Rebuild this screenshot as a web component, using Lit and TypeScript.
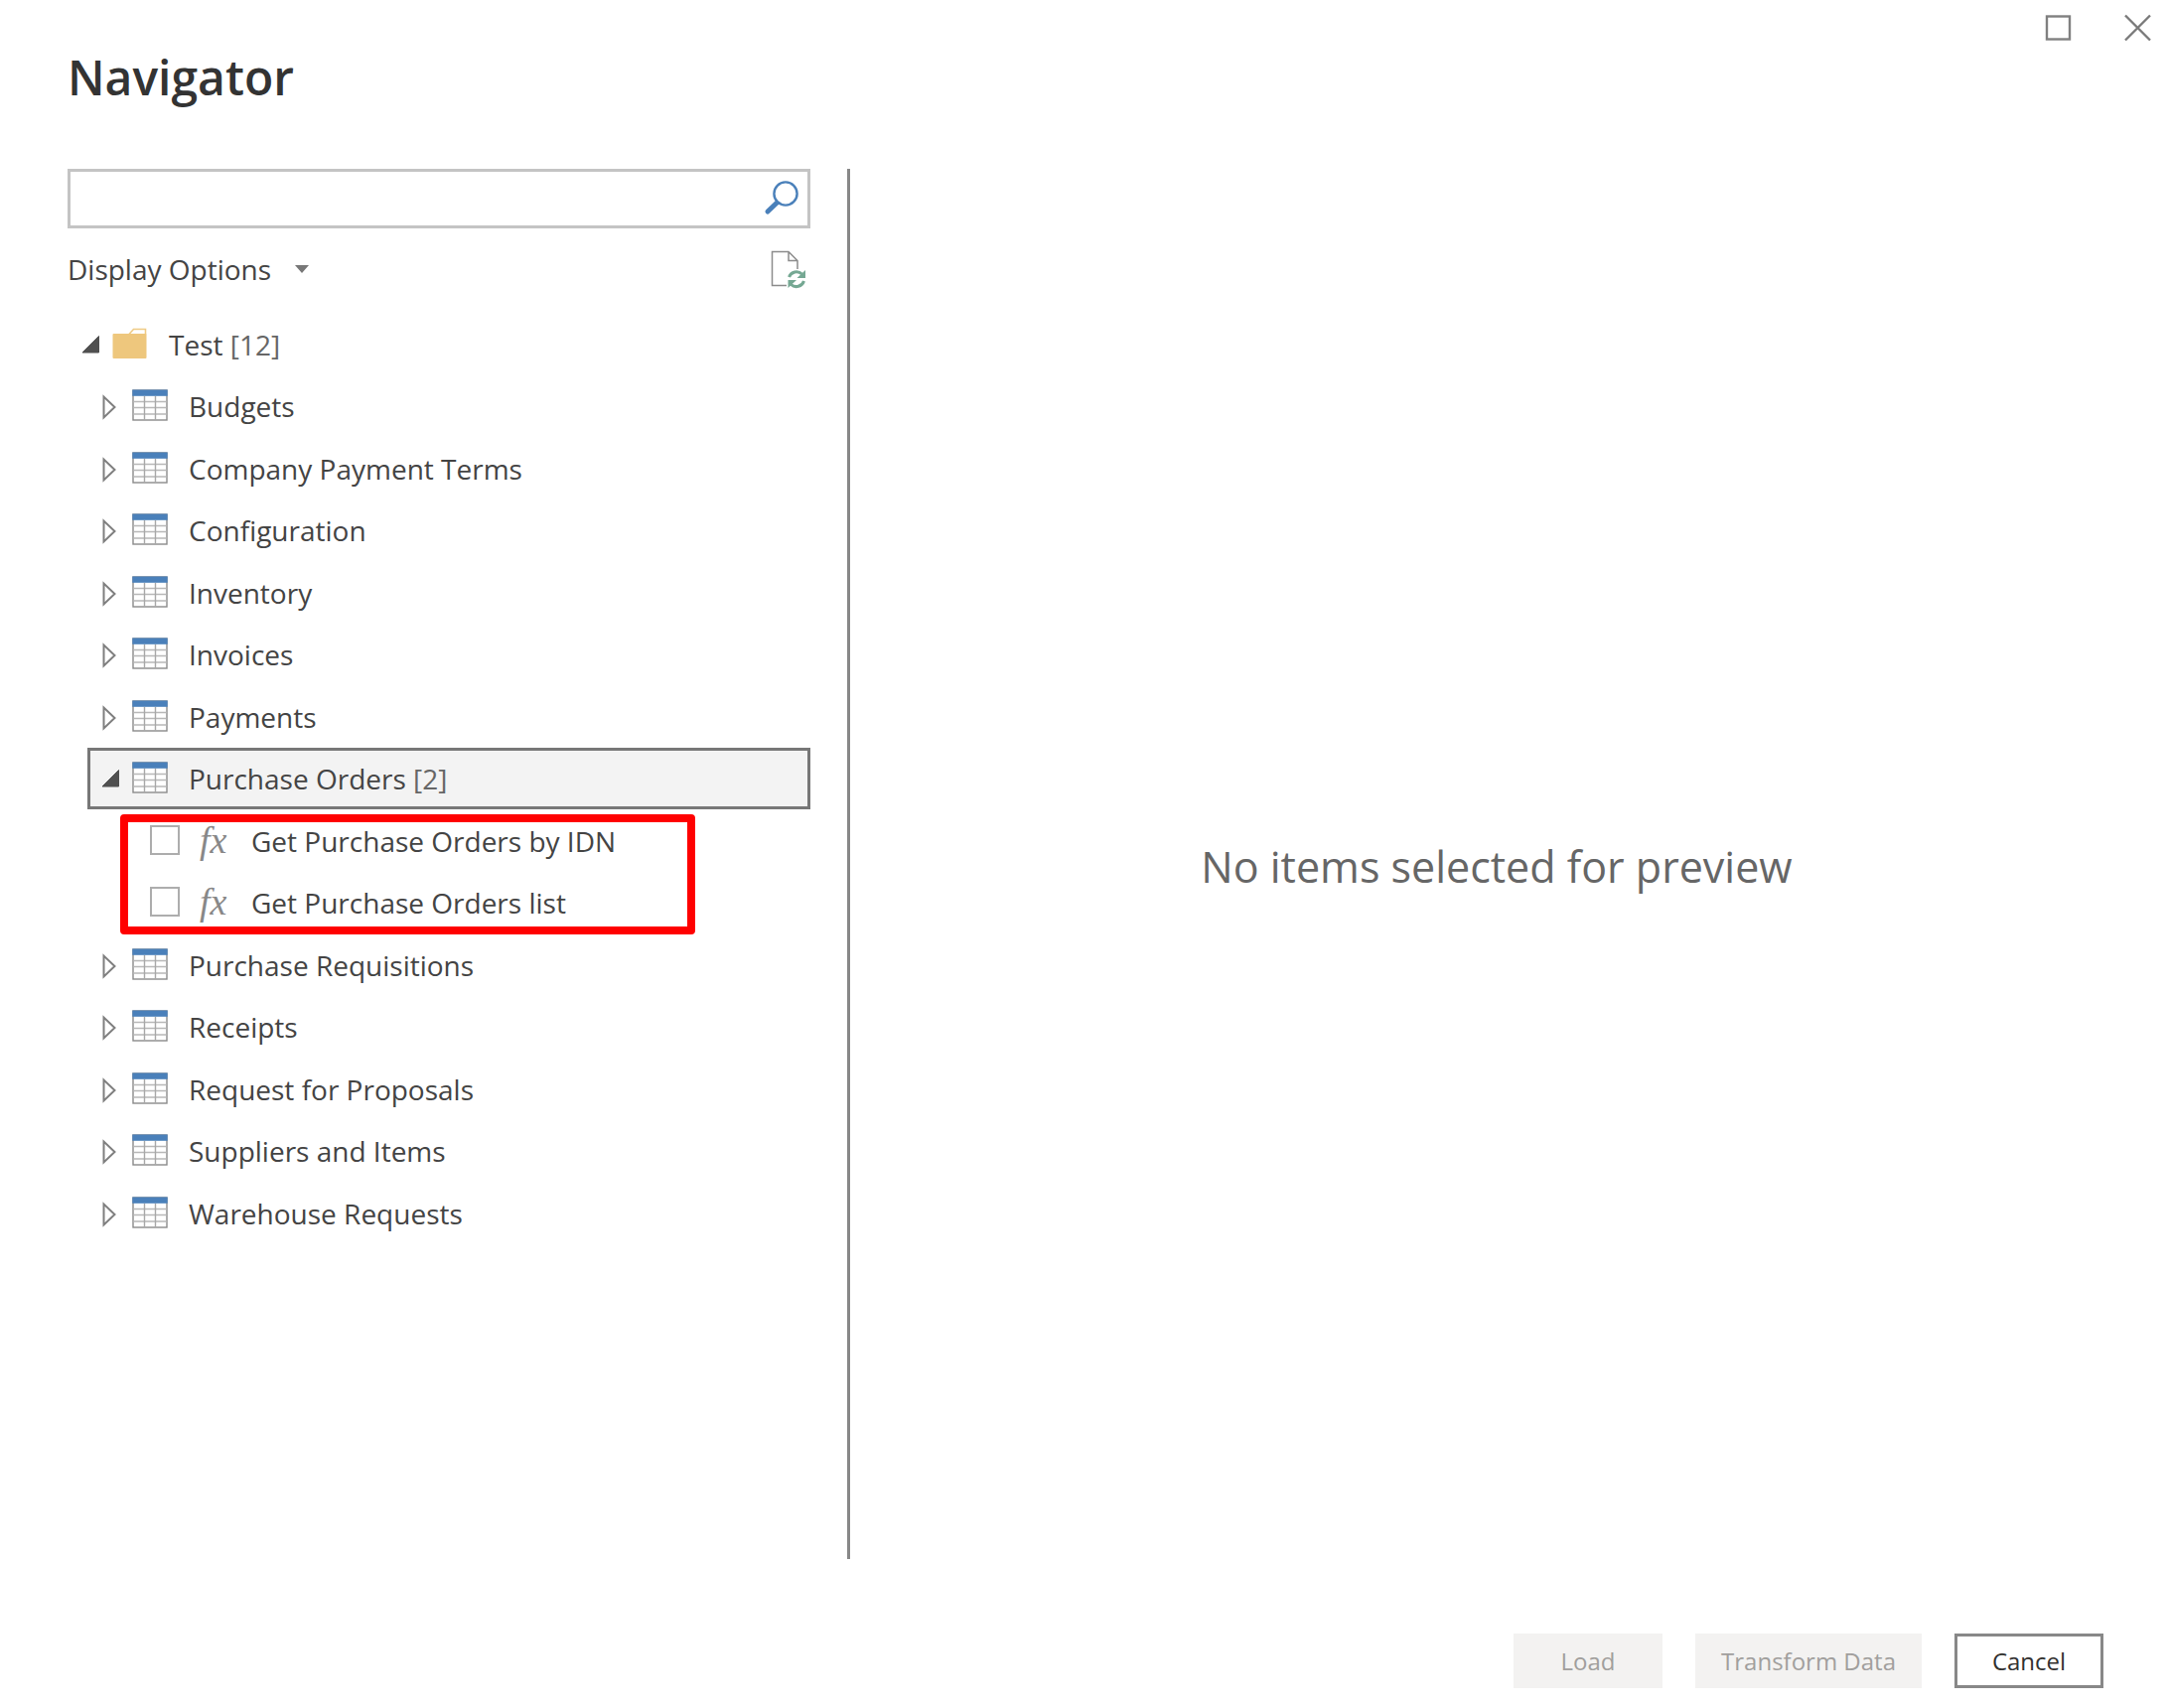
import { LitElement, html, css, svg, nothing } from "lit";
import { customElement, state } from "lit/decorators.js";
import { classMap } from "lit/directives/class-map.js";

interface Category {
  name: string;
  functions: string[];
}

const CATEGORIES: Category[] = [
  { name: "Budgets", functions: [] },
  { name: "Company Payment Terms", functions: [] },
  { name: "Configuration", functions: [] },
  { name: "Inventory", functions: [] },
  { name: "Invoices", functions: [] },
  { name: "Payments", functions: [] },
  {
    name: "Purchase Orders",
    functions: ["Get Purchase Orders by IDN", "Get Purchase Orders list"],
  },
  { name: "Purchase Requisitions", functions: [] },
  { name: "Receipts", functions: [] },
  { name: "Request for Proposals", functions: [] },
  { name: "Suppliers and Items", functions: [] },
  { name: "Warehouse Requests", functions: [] },
];

const arrowOpen = html`<svg class="arrow" viewBox="0 0 24 28" aria-hidden="true">
  <path d="M20.5 5.5V22H4z" fill="#505050" stroke="#505050" stroke-width="1" />
</svg>`;

const arrowClosed = html`<svg class="arrow" viewBox="0 0 24 28" aria-hidden="true">
  <path d="M5.5 4.5V25.5L16.5 15z" fill="#fff" stroke="#7f7f7f" stroke-width="2" />
</svg>`;

const folderIcon = html`<svg class="icon" viewBox="0 0 36 32" aria-hidden="true">
  <path d="M17 6.5L21.5 1.5H33.5V7" fill="#fff" stroke="#efcb85" stroke-width="1.6" />
  <rect x="0.5" y="6" width="34" height="25" rx="1" fill="#eec77d" />
</svg>`;

const tableIcon = html`<svg class="icon" viewBox="0 0 36 32" aria-hidden="true">
  <rect x="1" y="1" width="34" height="30" fill="#fff" stroke="#8a8a8a" stroke-width="1.4" />
  ${svg`<path d="M1.5 12.5H34.5M1.5 18.5H34.5M1.5 25H34.5" stroke="#b8b8b8" stroke-width="1.4" />
  <path d="M12.5 7V31M23.5 7V31" stroke="#a8a8a8" stroke-width="1.4" />`}
  <rect x="0.3" y="0.5" width="35.4" height="6.3" fill="#4a80ba" />
</svg>`;

@customElement("app-root")
export class AppRoot extends LitElement {
  static styles = css`
    :host {
      display: block;
      color: #444;
      background: #fff;
      font-family: "Open Sans", "Noto Sans", sans-serif;
      font-size: 28px;
      line-height: 40px;
    }
    .dialog {
      box-sizing: border-box;
      min-height: 100vh;
      display: flex;
      flex-direction: column;
      padding: 0 0 20px 68px;
    }
    button,
    input {
      font: inherit;
      color: inherit;
      margin: 0;
      padding: 0;
      border: 0;
      border-radius: 0;
      background: none;
    }
    svg {
      display: block;
    }
    .top {
      display: flex;
      justify-content: space-between;
      align-items: flex-start;
      height: 170px;
    }
    .title {
      margin: 0;
      padding-top: 44px;
      font-size: 48px;
      line-height: 68px;
      font-weight: 600;
      color: #333;
    }
    .window-controls {
      display: flex;
      gap: 40px;
      padding: 8px 11px 0 0;
    }
    .window-controls button,
    .window-controls svg {
      width: 40px;
      height: 40px;
    }
    .panes {
      flex: 1;
      display: grid;
      grid-template-columns: 394fr 651fr;
      margin-right: 25px;
    }
    .browser {
      min-width: 0;
      padding-right: 37px;
      border-right: 3px solid #888;
    }
    .search {
      display: flex;
      align-items: center;
      box-sizing: border-box;
      height: 60px;
      padding-right: 7px;
      border: 3px solid #c4c4c4;
    }
    .search input {
      flex: 1;
      min-width: 0;
      height: 100%;
      padding: 0 10px;
      outline: none;
    }
    .search svg {
      width: 40px;
      height: 40px;
    }
    .options {
      display: flex;
      justify-content: space-between;
      align-items: center;
      box-sizing: border-box;
      height: 85px;
      padding: 0 4px 4px 0;
    }
    .display-options {
      display: flex;
      align-items: center;
      gap: 23px;
    }
    .display-options svg {
      width: 16px;
      height: 10px;
    }
    .refresh svg {
      width: 36px;
      height: 40px;
    }
    .tree,
    .functions {
      list-style: none;
      margin: 0;
      padding: 0;
      display: grid;
      grid-auto-rows: 63px 62px;
    }
    .row {
      display: flex;
      align-items: center;
      box-sizing: border-box;
      border: 3px solid transparent;
      padding-left: 8px;
    }
    .category {
      margin-left: 20px;
    }
    .selected {
      border-color: #777;
      background: #f3f3f3;
    }
    .toggle {
      margin-right: 10px;
    }
    .arrow {
      width: 24px;
      height: 28px;
    }
    .icon {
      width: 36px;
      height: 32px;
      margin-bottom: 2px;
    }
    .label {
      margin-left: 21px;
      white-space: pre;
    }
    .count {
      color: #666;
    }
    .group {
      grid-row: span 2;
      position: relative;
    }
    /* Callout frame drawn over the function rows */
    .group::after {
      content: "";
      position: absolute;
      inset: 5px 116px -1px 53px;
      border: 8px solid #f00;
      border-radius: 4px;
      pointer-events: none;
    }
    .function {
      padding-left: 80px;
    }
    .function input {
      appearance: none;
      box-sizing: border-box;
      width: 30px;
      height: 30px;
      margin-bottom: 2px;
      border: 2px solid #adadad;
      background: #fff;
    }
    .function input:checked {
      background: #777;
    }
    .function label {
      display: flex;
      align-items: center;
    }
    .fx {
      width: 36px;
      margin: 0 0 2px 20px;
      font: italic 38px/40px "Liberation Serif", serif;
      color: #888;
    }
    .function .label {
      margin-left: 16px;
    }
    .preview {
      display: flex;
      align-items: center;
      justify-content: center;
      padding-top: 5px;
      font-size: 43px;
      line-height: 60px;
      color: #666;
    }
    .preview p {
      margin: 0;
    }
    .footer {
      display: flex;
      justify-content: flex-end;
      gap: 33px;
      padding: 75px 65px 0 0;
    }
    .action {
      box-sizing: border-box;
      height: 55px;
      min-width: 150px;
      padding: 0 23px;
      font-size: 24px;
      line-height: 36px;
      color: #323130;
      border: 3px solid #888;
    }
    .action:disabled {
      color: #a19f9d;
      background: #f3f2f1;
      border-color: #f3f2f1;
    }
  `;

  @state() private expanded = new Set<string>(["Test", "Purchase Orders"]);
  @state() private selected = "Purchase Orders";

  private toggle(name: string) {
    const next = new Set(this.expanded);
    if (!next.delete(name)) next.add(name);
    this.expanded = next;
  }

  private renderToggle(name: string) {
    const open = this.expanded.has(name);
    return html`<button
      class="toggle"
      type="button"
      aria-label=${(open ? "Collapse " : "Expand ") + name}
      @click=${() => this.toggle(name)}
    >
      ${open ? arrowOpen : arrowClosed}
    </button>`;
  }

  private renderCategory(item: Category) {
    const open = this.expanded.has(item.name);
    return html`<li
        class=${classMap({ row: true, category: true, selected: this.selected === item.name })}
        @click=${() => (this.selected = item.name)}
      >
        ${this.renderToggle(item.name)} ${tableIcon}
        <span class="label"
          >${item.name}${open && item.functions.length
            ? html`<span class="count">${` [${item.functions.length}]`}</span>`
            : nothing}</span
        >
      </li>
      ${open && item.functions.length
        ? html`<li class="group">
            <ul class="functions">
              ${item.functions.map(
                (fn, i) => html`<li class="row function">
                  <input type="checkbox" id=${`fn-${i}`} />
                  <label for=${`fn-${i}`}
                    ><span class="fx" aria-hidden="true">fx</span><span class="label">${fn}</span></label
                  >
                </li>`
              )}
            </ul>
          </li>`
        : nothing}`;
  }

  render() {
    return html`<div class="dialog">
      <header class="top">
        <h1 class="title">Navigator</h1>
        <div class="window-controls">
          <button type="button" aria-label="Maximize">
            <svg viewBox="0 0 40 40">
              <rect x="9" y="8.5" width="23" height="23" fill="none" stroke="#808080" stroke-width="2.4" />
            </svg>
          </button>
          <button type="button" aria-label="Close">
            <svg viewBox="0 0 40 40">
              <path d="M8 7.5L33 32.5M33 7.5L8 32.5" stroke="#7a7a7a" stroke-width="2.4" />
            </svg>
          </button>
        </div>
      </header>
      <main class="panes">
        <section class="browser">
          <div class="search">
            <input type="text" aria-label="Search" />
            <button type="button" aria-label="Search">
              <svg viewBox="0 0 40 40">
                <path d="M17.5 23L7 33" stroke="#4a80ba" stroke-width="5" stroke-linecap="round" />
                <circle cx="25" cy="15" r="11.6" fill="#fff" stroke="#4a80ba" stroke-width="2.4" />
              </svg>
            </button>
          </div>
          <div class="options">
            <button class="display-options" type="button">
              Display Options
              <svg viewBox="0 0 16 10" aria-hidden="true"><path d="M1 1H15L8 9z" fill="#777" /></svg>
            </button>
            <button class="refresh" type="button" aria-label="Refresh">
              <svg viewBox="0 0 36 40">
                <path
                  d="M16 36.5H1.5V2.5H18L27 11.5V20M18 2.5V11.5H27"
                  fill="none"
                  stroke="#8c8c8c"
                  stroke-width="1.5"
                />
                <g fill="none" stroke="#75a893" stroke-width="3">
                  <path d="M18.5 28A8 8 0 0 1 31.5 25" />
                  <path d="M33.5 32A8 8 0 0 1 20.5 35.5" />
                </g>
                <path d="M35 21V29H26.5zM17.5 39V31H26z" fill="#75a893" />
              </svg>
            </button>
          </div>
          <ul class="tree">
            <li class="row">
              ${this.renderToggle("Test")} ${folderIcon}
              <span class="label">Test<span class="count">${` [${CATEGORIES.length}]`}</span></span>
            </li>
            ${this.expanded.has("Test") ? CATEGORIES.map((c) => this.renderCategory(c)) : nothing}
          </ul>
        </section>
        <section class="preview"><p>No items selected for preview</p></section>
      </main>
      <footer class="footer">
        <button class="action" type="button" disabled>Load</button>
        <button class="action" type="button" disabled>Transform Data</button>
        <button class="action" type="button">Cancel</button>
      </footer>
    </div>`;
  }
}
